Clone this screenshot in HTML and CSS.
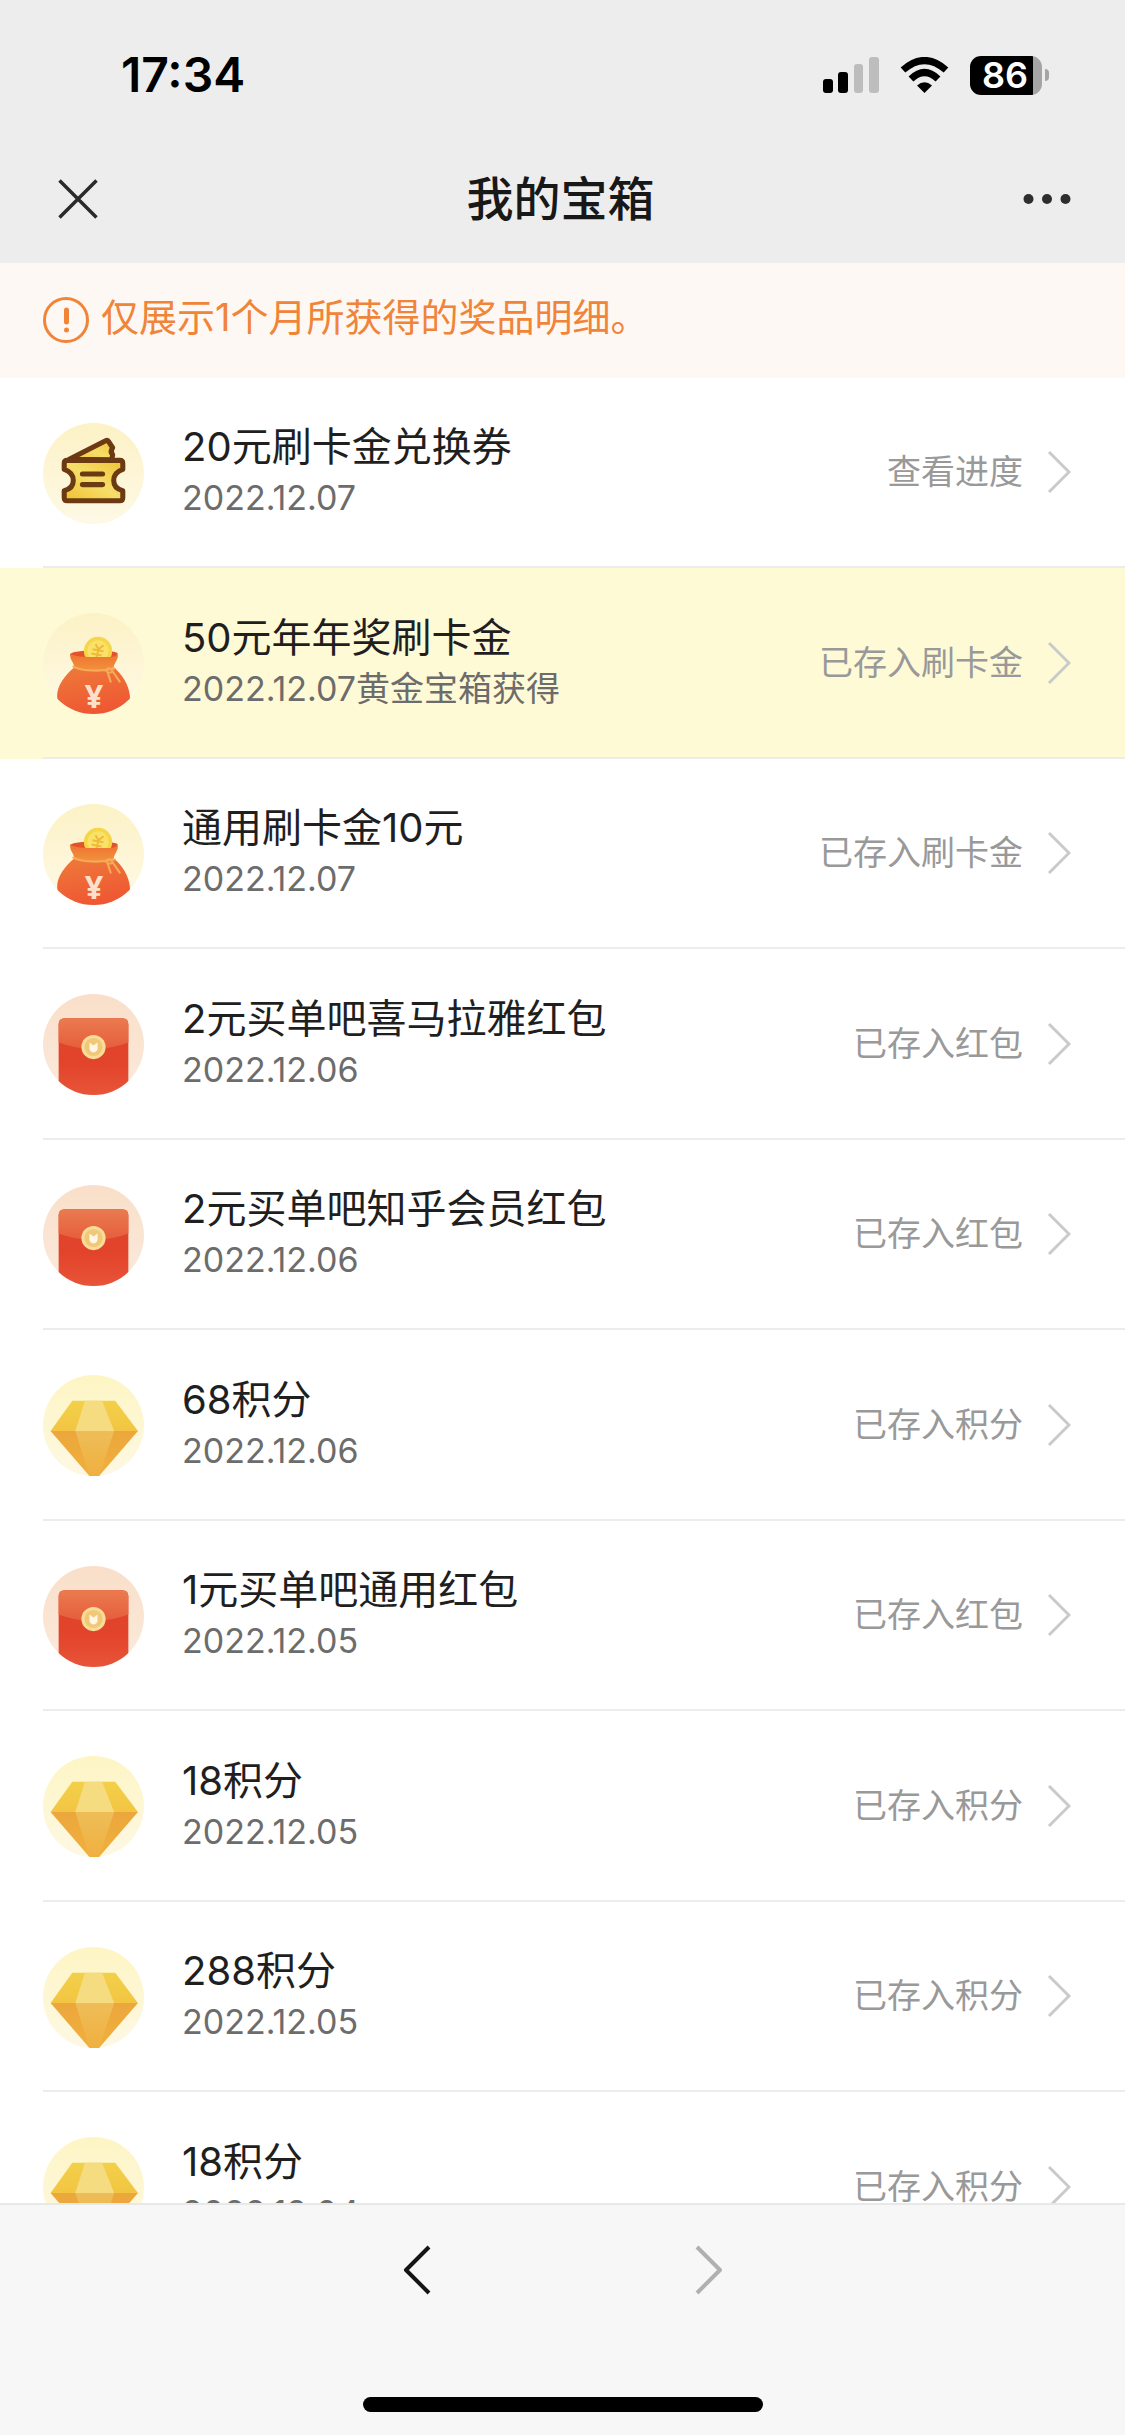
FILE: index.html
```html
<!DOCTYPE html>
<html lang="zh-CN">
<head>
    <meta charset="UTF-8">
    <meta name="viewport" content="width=device-width, initial-scale=1">
    <title>我的宝箱</title>
    <link rel="stylesheet" href="styles.css">
</head>
<body>
    <!-- shared icons -->
    <svg class="icon-defs" width="0" height="0" aria-hidden="true">
        <defs>
            <linearGradient id="bg-yellow" x1="0" y1="0" x2="0" y2="1">
                <stop offset="0" stop-color="#fcf2c6"/>
                <stop offset="1" stop-color="#fef9e6"/>
            </linearGradient>
            <linearGradient id="bg-gem" x1="0" y1="0" x2="0" y2="1">
                <stop offset="0" stop-color="#fef5c4"/>
                <stop offset="1" stop-color="#fdf8e4"/>
            </linearGradient>
            <linearGradient id="bg-red" x1="0" y1="0" x2="0" y2="1">
                <stop offset="0" stop-color="#f9dfc9"/>
                <stop offset="1" stop-color="#fbeadc"/>
            </linearGradient>
            <linearGradient id="gold" x1="0" y1="1" x2="1" y2="0">
                <stop offset="0" stop-color="#efc030"/>
                <stop offset=".5" stop-color="#f6de6a"/>
                <stop offset="1" stop-color="#f0c136"/>
            </linearGradient>
            <linearGradient id="bag-body" x1="0" y1="0" x2=".3" y2="1">
                <stop offset="0" stop-color="#ef7a3a"/>
                <stop offset="1" stop-color="#ee5733"/>
            </linearGradient>
            <linearGradient id="bag-neck" x1="0" y1="0" x2="0" y2="1">
                <stop offset="0" stop-color="#ee7232"/>
                <stop offset="1" stop-color="#f2913c"/>
            </linearGradient>
            <linearGradient id="env-body" x1="0" y1="0" x2="0" y2="1">
                <stop offset="0" stop-color="#e2432b"/>
                <stop offset=".5" stop-color="#e2432b"/>
                <stop offset="1" stop-color="#ea5a3c"/>
            </linearGradient>
            <linearGradient id="env-flap" x1="0" y1="0" x2="0" y2="1">
                <stop offset="0" stop-color="#ea7b4f"/>
                <stop offset="1" stop-color="#e65d3c"/>
            </linearGradient>
            <linearGradient id="gem-top" x1="0" y1="0" x2="0" y2="1">
                <stop offset="0" stop-color="#f3d04a"/>
                <stop offset="1" stop-color="#f2c542"/>
            </linearGradient>
            <linearGradient id="gem-low" x1="0" y1="0" x2="0" y2="1">
                <stop offset="0" stop-color="#eca73c"/>
                <stop offset="1" stop-color="#f0b03c"/>
            </linearGradient>
            <linearGradient id="gem-mid" x1="0" y1="0" x2="0" y2="1">
                <stop offset="0" stop-color="#eebd58"/>
                <stop offset="1" stop-color="#f0b040"/>
            </linearGradient>
            <clipPath id="round"><circle cx="50" cy="50" r="50"/></clipPath>
        </defs>
        <symbol id="icon-ticket" viewBox="0 0 100 100">
            <circle cx="50" cy="50" r="50" fill="url(#bg-yellow)"/>
            <g fill="url(#gold)" stroke="#6b3a12" stroke-width="5" stroke-linejoin="round" stroke-linecap="round">
                <path d="M26 36 62 17.500q2-1 3 1l4 6q-3 4 0 7l-1 5z"/>
                <path d="M24 37h52q3 0 3 3V46q-9 3-9 11t9 10v7q0 3-3 3H24q-3 0-3-3v-7q9-2 9-10t-9-11v-6q0-3 3-3z"/>
                <path d="M39 50.500h20M39 61h20"/>
            </g>
        </symbol>
        <symbol id="icon-bag" viewBox="0 0 100 100">
            <circle cx="50" cy="50" r="50" fill="url(#bg-yellow)"/>
            <path d="M27 41c0-5 46-5 47-1l-4 8H31z" fill="#e2532a"/>
            <circle cx="54.500" cy="37.500" r="14" fill="#f7d548"/>
            <circle cx="54.500" cy="37.500" r="10.500" fill="#fae268"/>
            <path d="M52 31l3 5 5-4M49 36l11 2M48 40l10 2M55 36l-2 8" fill="none" stroke="#efb93a" stroke-width="2"/>
            <g clip-path="url(#round)">
                <path d="M31 54C22 61 14 72 14 82q0 20 37 20t35-20C85 71 78 60 70 54z" fill="url(#bag-body)"/>
            </g>
            <path d="M27 40c4 3 11 3 17 3.500h22c4 0 7-1 8-3 1 5-3 8-4 13-8 4-32 4-39 1 0-6-5-8-4-14.500z" fill="url(#bag-neck)"/>
            <path d="M30 53c10 5 28 5 41 2M63 56l4 12M67 55l9 13M62 57q3-4 6-1t-4 3" fill="none" stroke="#f5ab58" stroke-width="2" stroke-linecap="round"/>
        </symbol>
        <symbol id="icon-envelope" viewBox="0 0 100 100">
            <circle cx="50" cy="50" r="50" fill="url(#bg-red)"/>
            <g clip-path="url(#round)">
                <path d="M15.500 110V30q0-6 6-6h57q6 0 6 6v80z" fill="url(#env-body)"/>
                <path d="M15.500 48V30q0-6 6-6h57q6 0 6 6v18q-34.500 13-69 0z" fill="url(#env-flap)"/>
            </g>
            <circle cx="50" cy="52.500" r="12" fill="#f8dd98"/>
            <circle cx="50" cy="52.500" r="9" fill="#f1c878"/>
            <path d="M46 48l4 3 4-3v6q0 3-4 4-4-1-4-4z" fill="#fff6e4"/>
        </symbol>
        <symbol id="icon-gem" viewBox="0 0 100 100">
            <circle cx="50" cy="50" r="50" fill="url(#bg-gem)"/>
            <path d="M29 25.500h42.500L94 55.500H7.500z" fill="url(#gem-top)"/>
            <path d="M7.500 55.500H94L55.500 100H46z" fill="url(#gem-low)"/>
            <path d="M41.500 25.500h17l12 30H32z" fill="#f5dc80"/>
            <path d="M32 55.500h38.500L55.500 100H46z" fill="url(#gem-mid)"/>
        </symbol>
        <symbol id="icon-arrow" viewBox="0 0 24 44">
            <path d="M2 2 22 22 2 42" fill="none" stroke="currentColor" stroke-width="3"/>
        </symbol>
    </svg>

    <header class="top">
        <div class="status-bar">
            <span class="time">17:34</span>
            <div class="status-icons">
                <svg class="signal" viewBox="0 0 56 36" width="56" height="36">
                    <rect x="0" y="22" width="10" height="14" rx="3"/>
                    <rect x="15" y="15" width="10" height="21" rx="3"/>
                    <rect x="31" y="7" width="9" height="29" rx="3" fill="#bdbdbd"/>
                    <rect x="46" y="0" width="10" height="36" rx="3" fill="#bdbdbd"/>
                </svg>
                <svg class="wifi" viewBox="0 0 49 36" width="49" height="36">
                    <path d="M3 13Q24.500-6 46 13" fill="none" stroke="#000" stroke-width="7"/>
                    <path d="M11 22Q24.500 9 38 22" fill="none" stroke="#000" stroke-width="7"/>
                    <path d="M17 28.500q7.500-6.500 15 0L24.500 36z"/>
                </svg>
                <span class="battery">86</span>
                <span class="battery-tip"></span>
            </div>
        </div>
        <nav class="nav-bar">
            <button aria-label="关闭">
                <svg viewBox="0 0 40 40" width="40" height="40">
                    <path d="M1.500 1.500l37 37M38.500 1.500l-37 37" fill="none" stroke="#2a2a2a" stroke-width="3.500"/>
                </svg>
            </button>
            <h1>我的宝箱</h1>
            <button aria-label="更多">
                <svg viewBox="0 0 48 12" width="48" height="12" fill="#2e2e2e">
                    <circle cx="5.500" cy="6" r="5"/>
                    <circle cx="24" cy="6" r="5"/>
                    <circle cx="42.500" cy="6" r="5"/>
                </svg>
            </button>
        </nav>
    </header>

    <main class="content">
        <div class="notice">
            <svg viewBox="0 0 46 46" width="46" height="46">
                <circle cx="23" cy="23" r="21.500" fill="none" stroke="#f08438" stroke-width="3"/>
                <path d="M23.500 13v12" stroke="#f08438" stroke-width="5" stroke-linecap="round"/>
                <circle cx="23.500" cy="33" r="2.500" fill="#f08438"/>
            </svg>
            <p>仅展示1个月所获得的奖品明细。</p>
        </div>

        <ul class="prizes">
            <li><a class="prize" href="#">
                <svg class="prize-icon"><use href="#icon-ticket"/></svg>
                <div class="prize-row">
                    <div class="prize-info"><h2>20元刷卡金兑换券</h2><p>2022.12.07</p></div>
                    <span class="prize-state">查看进度</span>
                    <svg class="arrow"><use href="#icon-arrow"/></svg>
                </div>
            </a></li>
            <li><a class="prize highlight" href="#">
                <svg class="prize-icon" viewBox="0 0 100 100">
                    <use href="#icon-bag"/>
                    <text x="50.500" y="94" class="bag-mark">¥</text>
                </svg>
                <div class="prize-row">
                    <div class="prize-info"><h2>50元年年奖刷卡金</h2><p>2022.12.07黄金宝箱获得</p></div>
                    <span class="prize-state">已存入刷卡金</span>
                    <svg class="arrow"><use href="#icon-arrow"/></svg>
                </div>
            </a></li>
            <li><a class="prize" href="#">
                <svg class="prize-icon" viewBox="0 0 100 100">
                    <use href="#icon-bag"/>
                    <text x="50.500" y="94" class="bag-mark">¥</text>
                </svg>
                <div class="prize-row">
                    <div class="prize-info"><h2>通用刷卡金10元</h2><p>2022.12.07</p></div>
                    <span class="prize-state">已存入刷卡金</span>
                    <svg class="arrow"><use href="#icon-arrow"/></svg>
                </div>
            </a></li>
            <li><a class="prize" href="#">
                <svg class="prize-icon"><use href="#icon-envelope"/></svg>
                <div class="prize-row">
                    <div class="prize-info"><h2>2元买单吧喜马拉雅红包</h2><p>2022.12.06</p></div>
                    <span class="prize-state">已存入红包</span>
                    <svg class="arrow"><use href="#icon-arrow"/></svg>
                </div>
            </a></li>
            <li><a class="prize" href="#">
                <svg class="prize-icon"><use href="#icon-envelope"/></svg>
                <div class="prize-row">
                    <div class="prize-info"><h2>2元买单吧知乎会员红包</h2><p>2022.12.06</p></div>
                    <span class="prize-state">已存入红包</span>
                    <svg class="arrow"><use href="#icon-arrow"/></svg>
                </div>
            </a></li>
            <li><a class="prize" href="#">
                <svg class="prize-icon"><use href="#icon-gem"/></svg>
                <div class="prize-row">
                    <div class="prize-info"><h2>68积分</h2><p>2022.12.06</p></div>
                    <span class="prize-state">已存入积分</span>
                    <svg class="arrow"><use href="#icon-arrow"/></svg>
                </div>
            </a></li>
            <li><a class="prize" href="#">
                <svg class="prize-icon"><use href="#icon-envelope"/></svg>
                <div class="prize-row">
                    <div class="prize-info"><h2>1元买单吧通用红包</h2><p>2022.12.05</p></div>
                    <span class="prize-state">已存入红包</span>
                    <svg class="arrow"><use href="#icon-arrow"/></svg>
                </div>
            </a></li>
            <li><a class="prize" href="#">
                <svg class="prize-icon"><use href="#icon-gem"/></svg>
                <div class="prize-row">
                    <div class="prize-info"><h2>18积分</h2><p>2022.12.05</p></div>
                    <span class="prize-state">已存入积分</span>
                    <svg class="arrow"><use href="#icon-arrow"/></svg>
                </div>
            </a></li>
            <li><a class="prize" href="#">
                <svg class="prize-icon"><use href="#icon-gem"/></svg>
                <div class="prize-row">
                    <div class="prize-info"><h2>288积分</h2><p>2022.12.05</p></div>
                    <span class="prize-state">已存入积分</span>
                    <svg class="arrow"><use href="#icon-arrow"/></svg>
                </div>
            </a></li>
            <li><a class="prize" href="#">
                <svg class="prize-icon"><use href="#icon-gem"/></svg>
                <div class="prize-row">
                    <div class="prize-info"><h2>18积分</h2><p>2022.12.04</p></div>
                    <span class="prize-state">已存入积分</span>
                    <svg class="arrow"><use href="#icon-arrow"/></svg>
                </div>
            </a></li>
        </ul>
    </main>

    <footer class="toolbar">
        <div class="history">
            <button aria-label="后退">
                <svg viewBox="0 0 28 50" width="28" height="50">
                    <path d="M26 2 3 25l23 23" fill="none" stroke="#151515" stroke-width="4" stroke-linejoin="round"/>
                </svg>
            </button>
            <button aria-label="前进" disabled>
                <svg viewBox="0 0 28 50" width="28" height="50">
                    <path d="M2 2l23 23L2 48" fill="none" stroke="#b0b0b0" stroke-width="4" stroke-linejoin="round"/>
                </svg>
            </button>
        </div>
        <div class="home-indicator"></div>
    </footer>
</body>
</html>
```
FILE: styles.css
```css
* {
    box-sizing: border-box;
}

body, h1, h2, p, ul {
    margin: 0;
    padding: 0;
}

body {
    display: flex;
    flex-direction: column;
    height: 100vh;
    overflow: hidden;
    background-color: #fff;
    font-family: Inter, "Noto Sans CJK SC", sans-serif;
}

button {
    display: flex;
    padding: 0;
    border: none;
    background: none;
    cursor: pointer;
}

svg {
    display: block;
    flex: none;
}

.icon-defs {
    position: absolute;
}

/* header */

.top {
    flex: none;
    background-color: #ededed;
}

.status-bar {
    display: flex;
    align-items: center;
    justify-content: space-between;
    height: 134px;
    padding: 16px 76px 0 121px;
}

.time {
    font-size: 48px;
    font-weight: 600;
    line-height: 60px;
}

.status-icons {
    display: flex;
    align-items: center;
}

.signal, .wifi {
    margin-right: 21px;
}

.battery {
    width: 72px;
    height: 39px;
    border-radius: 11px;
    padding-left: 12px;
    background: linear-gradient(to right, #000 63px, #a5a5a5 63px);
    color: #fff;
    font-size: 36px;
    font-weight: 600;
    line-height: 39px;
}

.battery-tip {
    width: 4px;
    height: 12px;
    margin-left: 3px;
    border-radius: 0 4px 4px 0;
    background-color: #a5a5a5;
}

.nav-bar {
    display: flex;
    align-items: center;
    height: 129px;
    padding: 0 54px 0 58px;
}

.nav-bar h1 {
    flex: 1;
    color: #181818;
    font-size: 47px;
    font-weight: 500;
    line-height: 60px;
    text-align: center;
}

/* prize list */

.content {
    flex: 1;
    min-height: 0;
    overflow: hidden;
}

.notice {
    display: flex;
    gap: 12px;
    align-items: flex-start;
    padding: 34px 43px 35px;
    background-color: #fef8f4;
}

.notice p {
    color: #f08438;
    font-size: 38px;
    line-height: 40px;
}

.prizes {
    list-style: none;
}

.prize {
    display: flex;
    align-items: center;
    height: 190px;
    padding-left: 43px;
    color: #999;
    text-decoration: none;
}

li:nth-child(even) .prize {
    height: 191px;
}

.highlight {
    background-color: #fffad6;
}

.prize-icon {
    width: 101px;
    height: 101px;
}

.bag-mark {
    font-family: "Noto Sans", sans-serif;
    font-size: 32px;
    font-weight: bold;
    text-anchor: middle;
    fill: #fde0cc;
}

.prize-row {
    display: flex;
    flex: 1;
    align-items: center;
    height: 100%;
    margin-left: -101px;
    padding: 0 54px 0 139px;
    border-bottom: 2px solid #ececee;
}

.prize-info {
    flex: 1;
}

.prize-info h2 {
    color: #1f1f1f;
    font-size: 40px;
    font-weight: 400;
    line-height: 52px;
}

.prize-info p {
    color: #6c6c6c;
    font-size: 34px;
    line-height: 50px;
}

.prize-state {
    font-size: 34px;
    line-height: 50px;
}

.arrow {
    width: 24px;
    height: 44px;
    margin-left: 24px;
    color: #cacaca;
}

/* browser toolbar */

.toolbar {
    display: flex;
    flex: none;
    flex-direction: column;
    align-items: center;
    justify-content: space-between;
    height: 232px;
    padding: 40px 0 23px;
    border-top: 2px solid #e8e8e8;
    background-color: #f7f7f7;
}

.history {
    display: flex;
    gap: 264px;
}

.home-indicator {
    width: 400px;
    height: 15px;
    border-radius: 8px;
    background-color: #000;
}
```
